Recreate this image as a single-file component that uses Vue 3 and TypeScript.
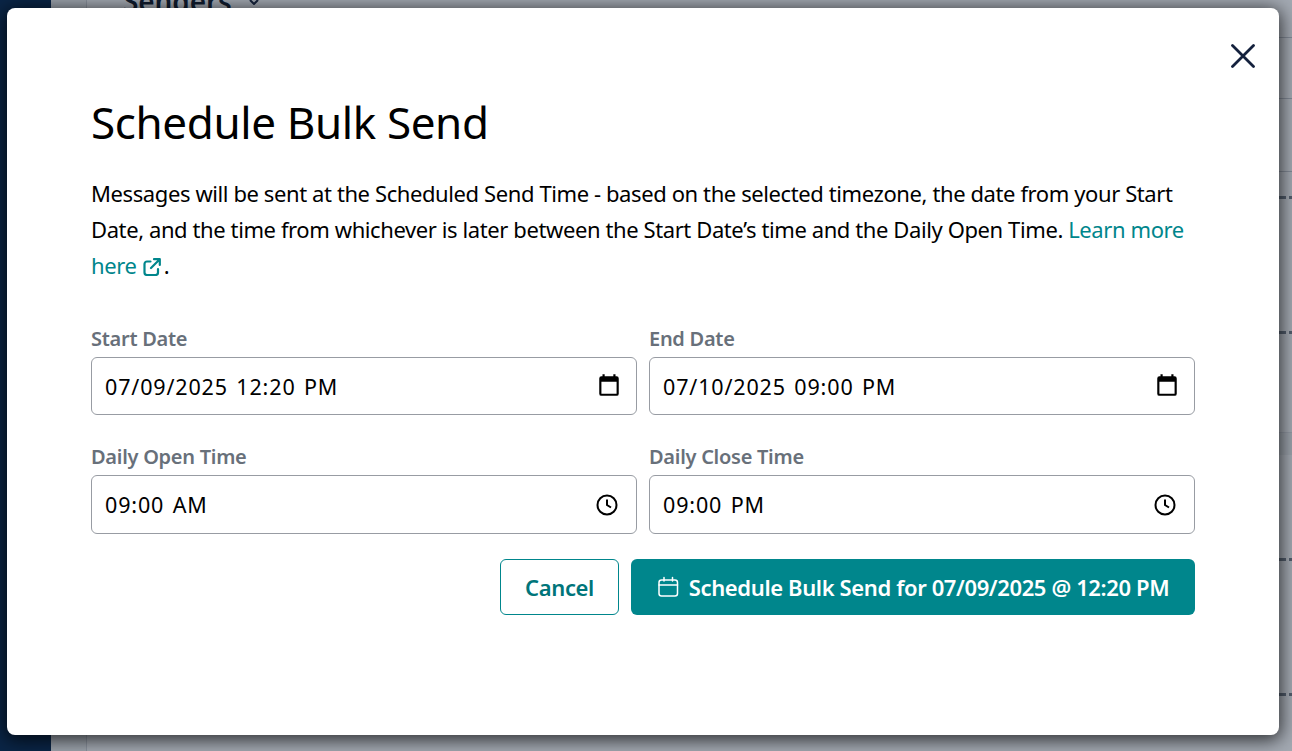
<script setup lang="ts">
const fields = [
  { label: 'Start Date', value: '07/09/2025 12:20 PM', icon: 'date' },
  { label: 'End Date', value: '07/10/2025 09:00 PM', icon: 'date' },
  { label: 'Daily Open Time', value: '09:00 AM', icon: 'time' },
  { label: 'Daily Close Time', value: '09:00 PM', icon: 'time' },
]
</script>

<template>
  <div class="page">
    <aside class="sidebar"></aside>
    <main class="main">
      <div class="rail"></div>
      <div class="content">
        <div class="title-row">
          Senders
          <svg class="caret" width="10" height="6" viewBox="0 0 10 6" fill="none" stroke="#14213d" stroke-width="2">
            <path d="M1 1l4 4 4-4" />
          </svg>
        </div>
        <div class="row row-a"></div>
        <div class="row row-b"></div>
        <div class="row row-c dashed"></div>
        <div class="row row-d dashed"></div>
        <div class="row row-e"></div>
        <div class="row row-f dashed"><div class="band"></div></div>
        <div class="row row-g dashed"></div>
      </div>
    </main>

    <div class="backdrop"></div>

    <div class="modal">
      <button class="close" aria-label="Close">
        <svg width="24" height="24" viewBox="0 0 24 24" fill="none" stroke="#14213d" stroke-width="2.8" stroke-linecap="round">
          <path d="M1.500 1.500 22.500 22.500M22.500 1.500 1.500 22.500" />
        </svg>
      </button>
      <h1>Schedule Bulk Send</h1>
      <p class="intro">
        Messages will be sent at the Scheduled Send Time - based on the selected timezone, the date from your Start
        Date, and the time from whichever is later between the Start Date’s time and the Daily Open Time.
        <a href="#" class="link">Learn more here
          <svg class="ext" width="18" height="18" viewBox="0 0 18 18" fill="none" stroke="currentColor" stroke-width="2.200" stroke-linecap="round" stroke-linejoin="round">
            <path d="M7.500 3.500H4A2.500 2.500 0 0 0 1.500 6v8.500A2.500 2.500 0 0 0 4 17h8.500a2.500 2.500 0 0 0 2.500-2.500V11" />
            <path d="M11 1.200h5.800V7M16.500 1.500 8 10" />
          </svg></a>.
      </p>

      <div class="grid">
        <div v-for="f in fields" :key="f.label" class="field">
          <label>{{ f.label }}</label>
          <div class="input" :class="f.icon">
            <span class="value">{{ f.value }}</span>
            <svg v-if="f.icon === 'date'" class="picker" width="26" height="26" viewBox="0 0 24 24" fill="#000">
              <path d="M19 4h-1V2h-2v2H8V2H6v2H5a2 2 0 0 0-2 2v14a2 2 0 0 0 2 2h14a2 2 0 0 0 2-2V6a2 2 0 0 0-2-2Zm0 16H5V9h14v11Z" />
            </svg>
            <svg v-else class="clock" width="24" height="24" viewBox="0 0 24 24" fill="none" stroke="#000" stroke-width="2">
              <circle cx="12" cy="12" r="9.500" />
              <path d="M12 6.500V12l4 2.500" />
            </svg>
          </div>
        </div>
      </div>

      <div class="actions">
        <button class="btn btn-outline">Cancel</button>
        <button class="btn btn-solid">
          <svg width="22" height="22" viewBox="0 0 22 22" fill="none" stroke="currentColor" stroke-width="1.500" stroke-linecap="round">
            <rect x="2" y="4" width="18.500" height="16" rx="2.500" />
            <path d="M2 9h18.500M7 1.500V5M15.500 1.500V5" />
          </svg>
          Schedule Bulk Send for 07/09/2025 @ 12:20 PM
        </button>
      </div>
    </div>
  </div>
</template>

<style>
html,
body {
  margin: 0;
  overflow: hidden;
}
</style>

<style scoped>
.page {
  position: relative;
  display: flex;
  width: 1292px;
  height: 751px;
  overflow: hidden;
  font-family: "Noto Sans", "Open Sans", sans-serif;
  color: #000;
}
.sidebar {
  width: 51px;
  background: #00234b;
}
.main {
  flex: 1;
  display: flex;
  background: #fff;
}
.rail {
  width: 35px;
  border-right: 1px solid #d5d8dc;
  background: #f4f5f6;
}
.content {
  flex: 1;
}
.title-row {
  box-sizing: border-box;
  height: 39px;
  margin-top: -1px;
  padding-left: 36px;
  font-size: 28px;
  font-weight: 600;
  line-height: 1px;
  letter-spacing: -0.1px;
  color: #0b1426;
  border-bottom: 1px solid #c9ccd1;
}
.caret {
  margin-left: 10px;
  vertical-align: 7px;
}
.row {
  box-sizing: border-box;
  border-bottom: 1px solid #c9ccd1;
}
.dashed {
  border-bottom: 0;
  background: linear-gradient(90deg, #78808a 7px, transparent 7px) 2px 100% / 10px 3px repeat-x;
}
.row-a {
  height: 61px;
}
.row-b {
  height: 73px;
}
.row-c {
  height: 27px;
}
.row-d {
  height: 135px;
}
.row-e {
  height: 99px;
  border-bottom-color: #e3e5e8;
}
.row-f {
  height: 128px;
}
.band {
  height: 22px;
  background: #f2f3f4;
}
.row-g {
  height: 135px;
}
.backdrop {
  position: absolute;
  inset: 0;
  background: rgba(24, 39, 62, 0.4);
}
.modal {
  position: absolute;
  left: 7px;
  top: 8px;
  box-sizing: border-box;
  width: 1272px;
  height: 727px;
  padding: 83px 84px 0;
  background: #fff;
  border-radius: 8px;
  box-shadow: 0 3px 18px 2px rgba(0, 0, 0, 0.72);
}
.close {
  position: absolute;
  top: 36px;
  right: 24px;
  padding: 0;
  border: 0;
  background: none;
  line-height: 0;
}
h1 {
  margin: 0;
  font-size: 44px;
  font-weight: 400;
  line-height: 62px;
  letter-spacing: -0.38px;
}
.intro {
  margin: 22px 0 0;
  font-size: 22px;
  line-height: 36px;
  letter-spacing: -0.4px;
}
.link {
  color: #00868c;
  text-decoration: none;
}
.ext {
  margin: 0 3px 0 1px;
  vertical-align: -2px;
}
.grid {
  display: grid;
  grid-template-columns: 546px 546px;
  column-gap: 12px;
  row-gap: 28px;
  margin-top: 42px;
}
.field label {
  display: block;
  margin-bottom: 4px;
  font-size: 20px;
  font-weight: 600;
  line-height: 28px;
  letter-spacing: -0.28px;
  color: #68707a;
}
.input {
  box-sizing: border-box;
  display: flex;
  align-items: center;
  justify-content: space-between;
  height: 58px;
  padding: 0 14px 0 13px;
  border: 1px solid #989ca3;
  border-radius: 6px;
  font-size: 21.5px;
  letter-spacing: 0.85px;
  word-spacing: 2px;
}
.field:nth-child(n + 3) .input {
  height: 59px;
}
.picker {
  margin-top: -2px;
}
.clock {
  margin-right: 3px;
}
.actions {
  display: flex;
  justify-content: flex-end;
  gap: 12px;
  margin-top: 25px;
}
.btn {
  box-sizing: border-box;
  display: flex;
  align-items: center;
  gap: 10px;
  height: 56px;
  border-radius: 6px;
  font-family: inherit;
  font-size: 22px;
  font-weight: 600;
  letter-spacing: -0.38px;
}
.btn-outline {
  width: 119px;
  justify-content: center;
  border: 1px solid #00868c;
  background: #fff;
  color: #00757a;
}
.btn-solid {
  width: 564px;
  justify-content: center;
  border: 0;
  background: #00868c;
  color: #fff;
}
</style>
